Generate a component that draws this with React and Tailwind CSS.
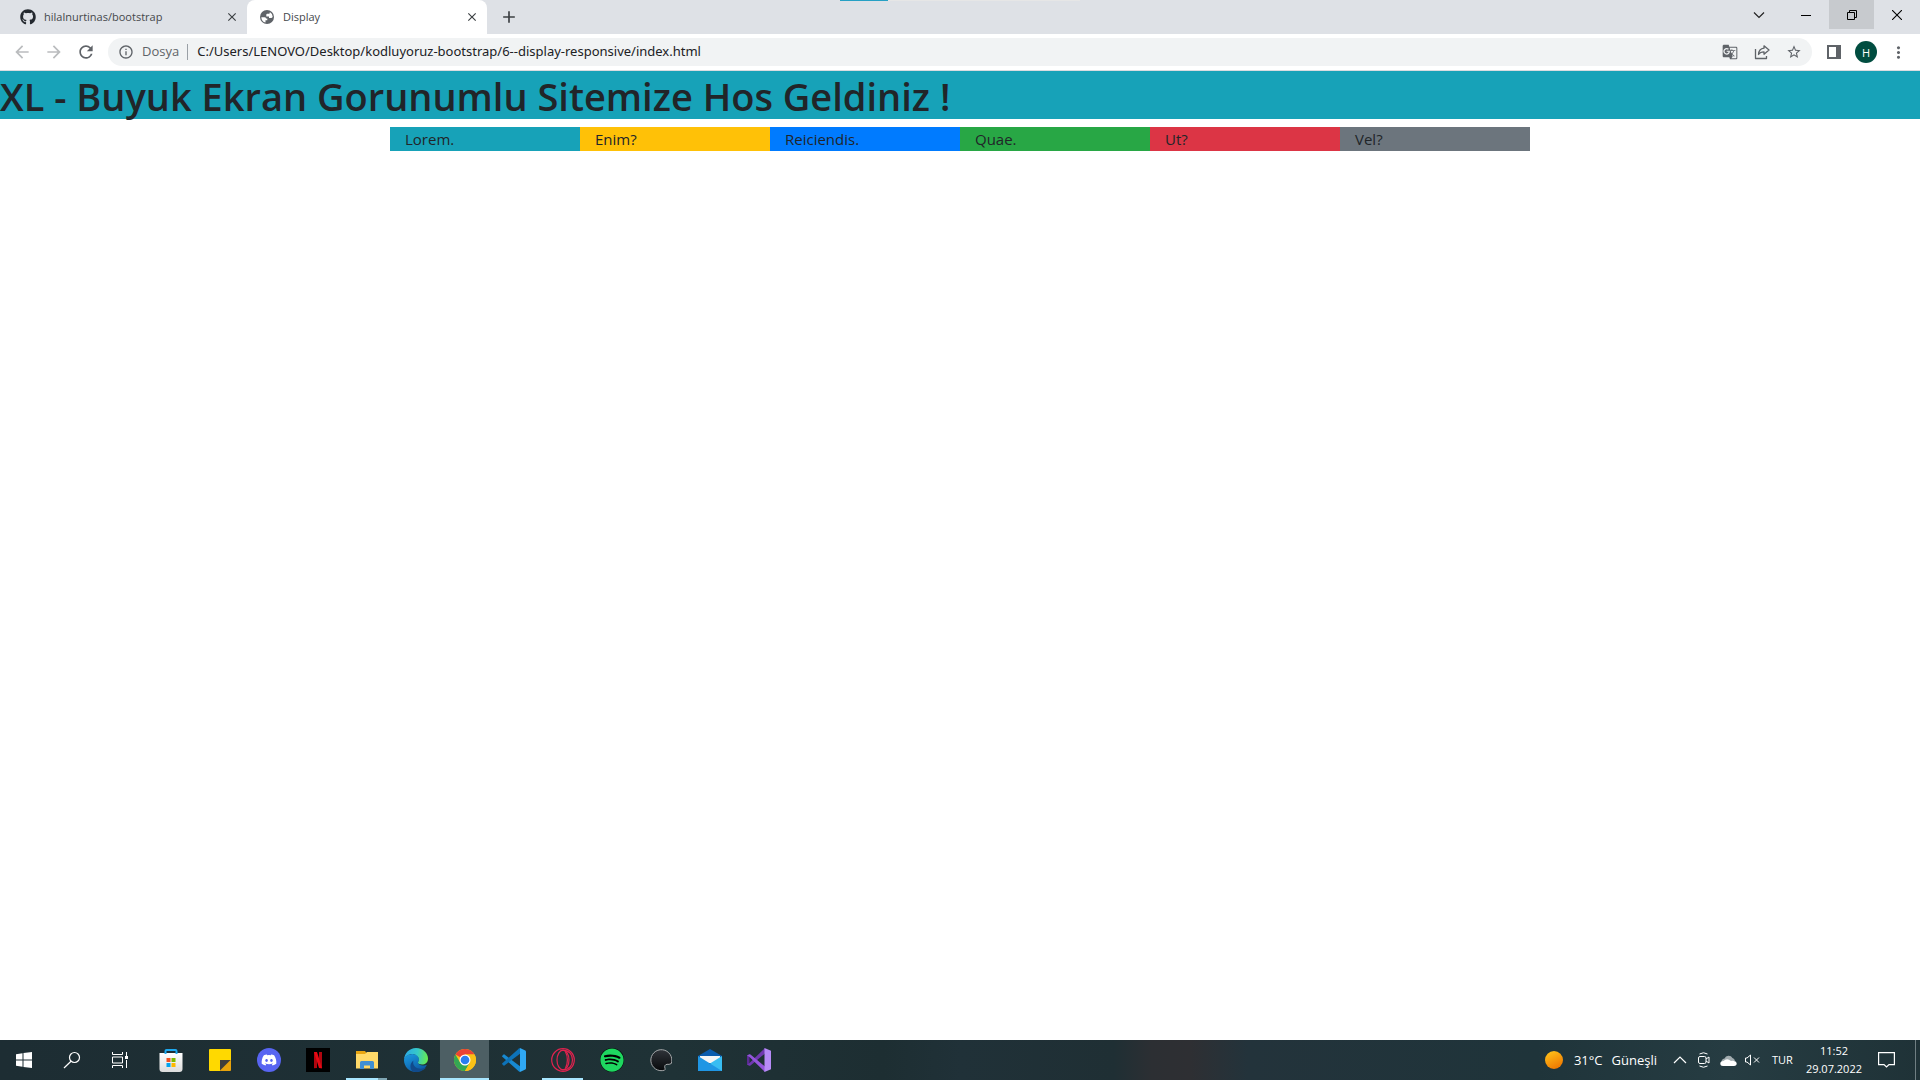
import React from "react";
import { FaGithub, FaDiscord, FaSpotify } from "react-icons/fa";
import {
  MdArrowBack, MdArrowForward, MdRefresh, MdInfoOutline, MdStarBorder,
  MdMoreVert, MdGTranslate, MdClose, MdAdd,
} from "react-icons/md";

const columns = [
  { text: "Lorem.", color: "bg-[#17a2b8]" },
  { text: "Enim?", color: "bg-[#ffc107]" },
  { text: "Reiciendis.", color: "bg-[#007bff]" },
  { text: "Quae.", color: "bg-[#28a745]" },
  { text: "Ut?", color: "bg-[#dc3545]" },
  { text: "Vel?", color: "bg-[#6c757d]" },
];

/* ---------- Browser icons ---------- */

const Globe = () => (
  <svg width="14" height="14" viewBox="0 0 14 14">
    <circle cx="7" cy="7" r="7" fill="#5f6368" />
    <path d="M1.300 7.200h3.200q1.500 0 1.500 1.300h1.300v1.800H5.500v2.300Q1.500 11.500 1.300 7.200zM9.800 2Q12.600 3.500 12.700 6.800 12.200 8.200 10.800 8H9V6.500H6.300V4.800q0-1 1-1H9q.8 0 .8-1z" fill="#fff" />
  </svg>
);
const ChevronDown = () => (
  <svg width="12" height="8" viewBox="0 0 12 8" fill="none" stroke="#222" strokeWidth="1.2"><path d="M1 1.5l5 5 5-5" /></svg>
);
const Minimize = () => (
  <svg width="10" height="10" viewBox="0 0 10 10"><path d="M0 5h10v1H0z" fill="#000" /></svg>
);
const Restore = () => (
  <svg width="10" height="10" viewBox="0 0 10 10" fill="none" stroke="#000"><path d="M.5 2.5h7v7h-7zM2.500 2.500v-2h7v7h-2" /></svg>
);
const CloseWindow = () => (
  <svg width="10" height="10" viewBox="0 0 10 10" fill="none" stroke="#000" strokeWidth="1.100"><path d="M0 0l10 10M10 0L0 10" /></svg>
);
const Share = () => (
  <svg width="16" height="16" viewBox="0 0 16 16" fill="none" stroke="#5f6368" strokeWidth="1.300" strokeLinejoin="round">
    <path d="M1.500 5v9.500h11V12" />
    <path d="M10 1.800l5 4.200-5 4.200V7.800C7.500 7.800 5.700 8.500 4.500 10.500 4.700 6.800 6.500 4.600 10 4.200z" />
  </svg>
);
const SidePanel = () => (
  <svg width="14" height="14" viewBox="0 0 14 14"><path fill="#5f6368" fillRule="evenodd" d="M0 0h14v14H0zM2 2v10h7V2z" /></svg>
);

/* ---------- Taskbar icons ---------- */

const StartIcon = () => (
  <svg width="16" height="16" viewBox="0 0 16 16" fill="#fff"><path d="M0 2.200L6.500 1.300V7.500H0zM7.500 1.100L16 0V7.500H7.500zM0 8.500H6.500V14.700L0 13.800zM7.500 8.500H16V16L7.500 14.900z" /></svg>
);
const SearchIcon = () => (
  <svg width="18" height="18" viewBox="0 0 18 18" fill="none" stroke="#fff" strokeWidth="1.200"><circle cx="11.500" cy="6.500" r="5" /><path d="M8 10.200L1 17" /></svg>
);
const TaskViewIcon = () => (
  <svg width="16" height="16" viewBox="0 0 16 16" fill="none" stroke="#fff"><path d="M.5 0v2.500h10V0M.5 16v-2.500h10V16M.5 5h10v6H.5zM14.500 0v4M14.500 8v8" /><path d="M13 4h3v3h-3z" fill="#fff" stroke="none" /></svg>
);
const StoreIcon = () => (
  <svg width="24" height="24" viewBox="0 0 24 24">
    <defs><linearGradient id="store" x1="0" y1="0" x2="0" y2="1"><stop stopColor="#fff" /><stop offset="1" stopColor="#dcdcdc" /></linearGradient></defs>
    <path d="M.5 5h23v16a3 3 0 0 1-3 3h-17a3 3 0 0 1-3-3z" fill="url(#store)" />
    <path d="M6.500 6V3Q6.500 2 7.500 2h9Q17.500 2 17.500 3V6" fill="none" stroke="#1eaaf1" strokeWidth="2" />
    <path d="M7.500 10h4v4h-4z" fill="#f25022" /><path d="M12.500 10h4v4h-4z" fill="#7fba00" />
    <path d="M7.500 15h4v4h-4z" fill="#00a4ef" /><path d="M12.500 15h4v4h-4z" fill="#ffb900" />
  </svg>
);
const NotesIcon = () => (
  <svg width="22" height="22" viewBox="0 0 22 22">
    <path d="M1 0h20a1 1 0 0 1 1 1v10L11 22H1a1 1 0 0 1-1-1V1a1 1 0 0 1 1-1z" fill="#ffd900" />
    <path d="M11 22V11h11v10a1 1 0 0 1-1 1z" fill="#e8a30c" /><path d="M11 21.500V11h10.500z" fill="#3f3d3c" />
  </svg>
);
const DiscordIcon = () => (
  <span className="flex size-6 items-center justify-center rounded-full bg-[#5865f2]"><FaDiscord size={16} color="#fff" /></span>
);
const NetflixIcon = () => (
  <svg width="24" height="24" viewBox="0 0 24 24"><path d="M0 0h24v24H0z" fill="#000" /><path d="M8 4h3v16l-3 .3zM13 4h3v16.300l-3-.3z" fill="#b1060f" /><path d="M8 4h3l5 16.300-3-.3z" fill="#e50914" /></svg>
);
const ExplorerIcon = () => (
  <svg width="22" height="18" viewBox="0 0 22 18">
    <path d="M0 0h9l1.500 2H22v15H0z" fill="#e8a512" /><path d="M0 3h9l2-2h11v16.500H0z" fill="#ffd969" />
    <path d="M4 18v-6.500Q4 10 5.500 10h11Q18 10 18 11.500V18h-4v-3.500H8V18z" fill="#3f8fd4" />
  </svg>
);
const EdgeIcon = () => (
  <svg width="24" height="24" viewBox="0 0 24 24">
    <defs>
      <linearGradient id="edgeTop" x1="0" y1=".3" x2="1" y2=".4"><stop stopColor="#2aa8e8" /><stop offset=".55" stopColor="#36c9c8" /><stop offset="1" stopColor="#66eb50" /></linearGradient>
      <linearGradient id="edgeLeft" x1="0" y1="0" x2=".6" y2="1"><stop stopColor="#1b9de2" /><stop offset="1" stopColor="#0c59a4" /></linearGradient>
    </defs>
    <path d="M12 24C5 24 0 18.500 0 12c0-3 4-6 8.500-6C13 6 15 9 15 11.500c0 1.500-1 2-1 3 0 1.500 2 3 5 3 2 0 3.300-.7 3.600-.5.500.3-3.300 7-10.600 7z" fill="url(#edgeLeft)" />
    <path d="M9 23.600C5.500 21 5.500 15.500 9.500 12.500c-1.500 5 2.500 8.500 7.500 8.300 2.500-.1 4.300-1.300 5-1.300C20.500 21.500 16 25 9 23.600z" fill="#114a8b" />
    <path d="M0 11.500C.5 5 5.500 0 12 0c7.500 0 12 5.500 12 10.500 0 4-2.800 6-6 6-2.500 0-4-.8-4-2 0-.9 1-1.400 1-3C15 8.500 12 6 8.500 6 4 6 .8 8.500 0 11.500z" fill="url(#edgeTop)" />
  </svg>
);
const ChromeIcon = () => (
  <svg width="22" height="22" viewBox="0 0 48 48">
    <circle cx="24" cy="24" r="24" fill="#fbc116" />
    <path d="M24 24L3.200 12A24 24 0 0 1 44.800 12H24z" fill="#ea4335" />
    <path d="M3.200 12L13.600 30 24 36 34.400 30 24 48A24 24 0 0 1 3.200 12z" fill="#34a853" />
    <path d="M24 12h20.800A24 24 0 0 1 24 48l10.400-18z" fill="#fbc116" />
    <circle cx="24" cy="24" r="12" fill="#fff" /><circle cx="24" cy="24" r="9.500" fill="#2a7df0" />
  </svg>
);
const VsCodeIcon = () => (
  <svg width="24" height="24" viewBox="0 0 24 24">
    <path d="M.3 8.800q-.5-.6 0-1.100l1.200-1.100q.5-.4 1-.1L18 18.300V24L17 23.500z" fill="#1789d1" />
    <path d="M.3 15.200q-.5.600 0 1.100l1.200 1.100q.5.400 1 .1L18 5.700V0L17 .5z" fill="#0d72b8" />
    <path d="M18 0l5.300 2.400Q24 2.800 24 3.500v17q0 .7-.7 1.100L18 24z" fill="#2fa8f4" />
  </svg>
);
const OperaIcon = () => (
  <svg width="24" height="24" viewBox="0 0 24 24" fill="none" stroke="#e0234f" strokeWidth="1.200">
    <circle cx="12" cy="12" r="11.300" /><ellipse cx="12" cy="12" rx="6" ry="9.800" />
    <path d="M10 2.500C19 1 21.500 8 21.500 12S19 23 10 21.500M14.500 4C17 8 17 16 14.500 20" />
  </svg>
);
const SpotifyIcon = () => (
  <span className="flex size-6 items-center justify-center rounded-full bg-black"><FaSpotify size={24} color="#1ed760" /></span>
);
const MoonIcon = () => (
  <svg width="22" height="24" viewBox="0 0 22 24">
    <defs><linearGradient id="moon" x1="0" y1="0" x2="0" y2="1"><stop stopColor="#30343a" /><stop offset="1" stopColor="#07090b" /></linearGradient></defs>
    <path d="M21.300 15.500A10.500 10.500 0 1 0 14.500 22.200Q15.500 21.500 15 20.300 13.800 17 17 16.300 19 16.800 21.300 15.500z" fill="url(#moon)" stroke="#a5a8aa" strokeWidth="1" />
  </svg>
);
const MailIcon = () => (
  <svg width="24" height="22" viewBox="0 0 24 22">
    <path d="M0 7L12 0l12 7v5H0z" fill="#0b5cad" /><path d="M2 7h20v7H2z" fill="#f5f5f5" />
    <path d="M24 7v15H0z" fill="#38bdf2" /><path d="M0 7l12 7.500L24 22H0z" fill="#1f96e4" />
  </svg>
);
const VisualStudioIcon = () => (
  <svg width="24" height="24" viewBox="0 0 24 24">
    <path d="M0 7.500l2.500-1.300V17.800L0 16.500z" fill="#5b2a94" />
    <path d="M0 16.500l2.500 1.300Q3 18 3.500 17.500L18 5.500V0L2.500 15z" fill="#6f38b0" />
    <path d="M0 7.500l2.500-1.300Q3 6 3.500 6.500L18 18.500V24L2.500 9z" fill="#9456dc" />
    <path d="M17.500 0L24 2.800v18.400L17.500 24z" fill="#b78bf7" />
  </svg>
);

const apps = [
  { name: "Store", icon: StoreIcon },
  { name: "Notes", icon: NotesIcon },
  { name: "Discord", icon: DiscordIcon },
  { name: "Netflix", icon: NetflixIcon },
  { name: "Explorer", icon: ExplorerIcon, state: "stacked" },
  { name: "Edge", icon: EdgeIcon },
  { name: "Chrome", icon: ChromeIcon, state: "active" },
  { name: "VS Code", icon: VsCodeIcon },
  { name: "Opera", icon: OperaIcon, state: "open" },
  { name: "Spotify", icon: SpotifyIcon },
  { name: "Moon", icon: MoonIcon },
  { name: "Mail", icon: MailIcon },
  { name: "Visual Studio", icon: VisualStudioIcon },
];

function TabStrip() {
  return (
    <div className="relative flex h-[34px] bg-[#dee1e6] text-[11px] leading-4 text-[#45484b]">
      <div className="absolute top-0 left-[840px] flex h-px w-60 bg-[#e6e6e6]"><div className="w-12 bg-[#26a0c4]" /></div>
      <div className="flex w-[247px] items-center pr-2 pl-5">
        <FaGithub size={16} color="#24292f" />
        <span className="ml-2 flex-1">hilalnurtinas/bootstrap</span>
        <button aria-label="Close tab"><MdClose size={14} color="#3c4043" /></button>
      </div>
      <div className="flex w-60 items-center rounded-t-lg bg-white pr-2 pl-[13px]">
        <Globe />
        <span className="ml-[9px] flex-1">Display</span>
        <button aria-label="Close tab"><MdClose size={14} color="#3c4043" /></button>
      </div>
      <button aria-label="New tab" className="ml-3"><MdAdd size={20} color="#3c4043" /></button>
      <div className="ml-auto flex h-[29px]">
        <button aria-label="Search tabs" className="flex w-12 items-center justify-center"><ChevronDown /></button>
        <button aria-label="Minimize" className="flex w-[46px] items-center justify-center"><Minimize /></button>
        <button aria-label="Restore" className="flex w-[45px] items-center justify-center bg-[#c7cace]"><Restore /></button>
        <button aria-label="Close window" className="flex w-[46px] items-center justify-center"><CloseWindow /></button>
      </div>
    </div>
  );
}

function Toolbar() {
  return (
    <div className="flex h-[37px] items-center border-b border-[#dadce0] bg-white pl-3 text-[13px] text-[#5f6368]">
      <button aria-label="Back" disabled className="w-8 text-[#babcbe]"><MdArrowBack size={20} /></button>
      <button aria-label="Forward" disabled className="w-8 text-[#babcbe]"><MdArrowForward size={20} /></button>
      <button aria-label="Reload" className="w-8"><MdRefresh size={20} /></button>
      <div className="flex h-7 flex-1 items-center rounded-full bg-[#f1f3f4] px-[10px]">
        <MdInfoOutline size={16} />
        <span className="mx-2">Dosya</span>
        <span className="h-4 w-px bg-[#9aa0a6]" />
        <input aria-label="Address" readOnly value="C:/Users/LENOVO/Desktop/kodluyoruz-bootstrap/6--display-responsive/index.html" className="ml-[9px] min-w-0 flex-1 bg-transparent font-['Noto_Sans',sans-serif] text-[#202124] outline-none" />
        <div className="flex items-center gap-4">
          <button aria-label="Translate"><MdGTranslate size={16} /></button>
          <button aria-label="Share"><Share /></button>
          <button aria-label="Bookmark"><MdStarBorder size={16} /></button>
        </div>
      </div>
      <button aria-label="Side panel" className="ml-[15px]"><SidePanel /></button>
      <button aria-label="Profile" className="ml-[14px] size-[22px] rounded-full bg-[#004d40] text-[11px] leading-none text-white">H</button>
      <button aria-label="Menu" className="mr-3 ml-3"><MdMoreVert size={19} /></button>
    </div>
  );
}

function Taskbar() {
  return (
    <footer className="flex h-10 bg-[linear-gradient(90deg,#1d2d33_0%,#1f3236_35%,#1d2e32_46%,#203138_50%,#1f2f34_58%,#2c2f33_60%,#2e2f33_62%,#23333b_65%,#1f343a_80%,#263c42_90%,#1f3237_100%)] text-white">
      <nav className="flex" aria-label="Taskbar">
        <button aria-label="Start" className="flex w-12 items-center justify-center"><StartIcon /></button>
        <button aria-label="Search" className="flex w-12 items-center justify-center"><SearchIcon /></button>
        <button aria-label="Task view" className="flex w-12 items-center justify-center"><TaskViewIcon /></button>
        <div className="ml-0.5 flex">
          {apps.map(({ name, icon: Icon, state }) => (
            <button key={name} aria-label={name} className={state === "active" ? "relative flex w-[49px] items-center justify-center bg-[#4d5f64]" : "relative flex w-[49px] items-center justify-center"}>
              <Icon />
              {state === "active" && <span className="absolute inset-x-0 bottom-0 h-0.5 bg-[#a8e6ff]" />}
              {state && state !== "active" && <span className="absolute inset-x-1 bottom-0 flex h-0.5 bg-[#a8e6ff]">{state === "stacked" && <span className="ml-auto w-[9px] bg-[#7fa6b3]" />}</span>}
            </button>
          ))}
        </div>
      </nav>
      <div className="ml-auto flex items-center">
        <svg width="18" height="18" viewBox="0 0 18 18"><defs><linearGradient id="sun" x1=".2" y1="0" x2=".7" y2="1"><stop stopColor="#ffc21a" /><stop offset="1" stopColor="#ee7500" /></linearGradient></defs><circle cx="9" cy="9" r="9" fill="url(#sun)" /></svg>
        <span className="ml-[11px] pt-0.5 text-[13px]">31°C</span>
        <span className="ml-[9px] pt-0.5 text-[13px]">Güneşli</span>
        <svg className="ml-4" width="14" height="8" viewBox="0 0 14 8" fill="none" stroke="#fff" strokeWidth="1.200"><path d="M1 7l6-6 6 6" /></svg>
        <svg className="ml-[11px]" width="12" height="16" viewBox="0 0 12 16" fill="none" stroke="#fff"><rect x=".5" y="4.500" width="7.500" height="7" rx="1.500" /><path d="M8 7l3-2v6L8 9M1.500 2Q5.500-.5 9.500 2M1.500 14q4 2.500 8 0" /></svg>
        <svg className="ml-[10px]" width="17" height="11" viewBox="0 0 17 11"><path d="M2 8.500A3.300 3.300 0 0 1 4.500 3.500 4.500 4.500 0 0 1 12.500 3q2 .5 2.500 3z" fill="#a3adb0" /><path d="M3 11Q.3 11 .3 8.500T3.500 6Q7 2.700 11 6q1.500-.7 3 0 2.700.3 2.700 2.600T14 11z" fill="#fff" /></svg>
        <svg className="ml-2" width="15" height="12" viewBox="0 0 15 12" fill="none" stroke="#fff"><path d="M.5 4v4H2l3.500 3V1L2 4zM9 3.500l5 5M14 3.500l-5 5" /></svg>
        <span className="ml-3 text-[11px]">TUR</span>
        <div className="ml-[13px] flex flex-col text-center text-[11px] leading-[18px]"><time>11:52</time><time>29.07.2022</time></div>
        <button aria-label="Notifications" className="ml-4"><svg width="17" height="16" viewBox="0 0 17 16" fill="none" stroke="#fff" strokeWidth="1.200"><path d="M.6.6h15.800v12H11L8.500 15 6 12.600H.6z" /></svg></button>
        <div className="ml-5 h-10 w-[5px] border-l border-[#6f7e82]" />
      </div>
    </footer>
  );
}

export default function App() {
  return (
    <div className="flex min-h-screen flex-col bg-white font-['Open_Sans','Noto_Sans',sans-serif]">
      <header><TabStrip /><Toolbar /></header>
      <main className="flex-1 text-[#212529]">
        <h1 className="mb-2 bg-[#17a2b8] pt-0.5 text-[38px] leading-[46px] font-semibold">XL - Buyuk Ekran Gorunumlu Sitemize Hos Geldiniz !</h1>
        <div className="mx-auto grid max-w-[1140px] grid-cols-6">
          {columns.map((c) => (
            <div key={c.text} className={`px-[15px] text-[15px] leading-6 ${c.color}`}>{c.text}</div>
          ))}
        </div>
      </main>
      <Taskbar />
    </div>
  );
}
